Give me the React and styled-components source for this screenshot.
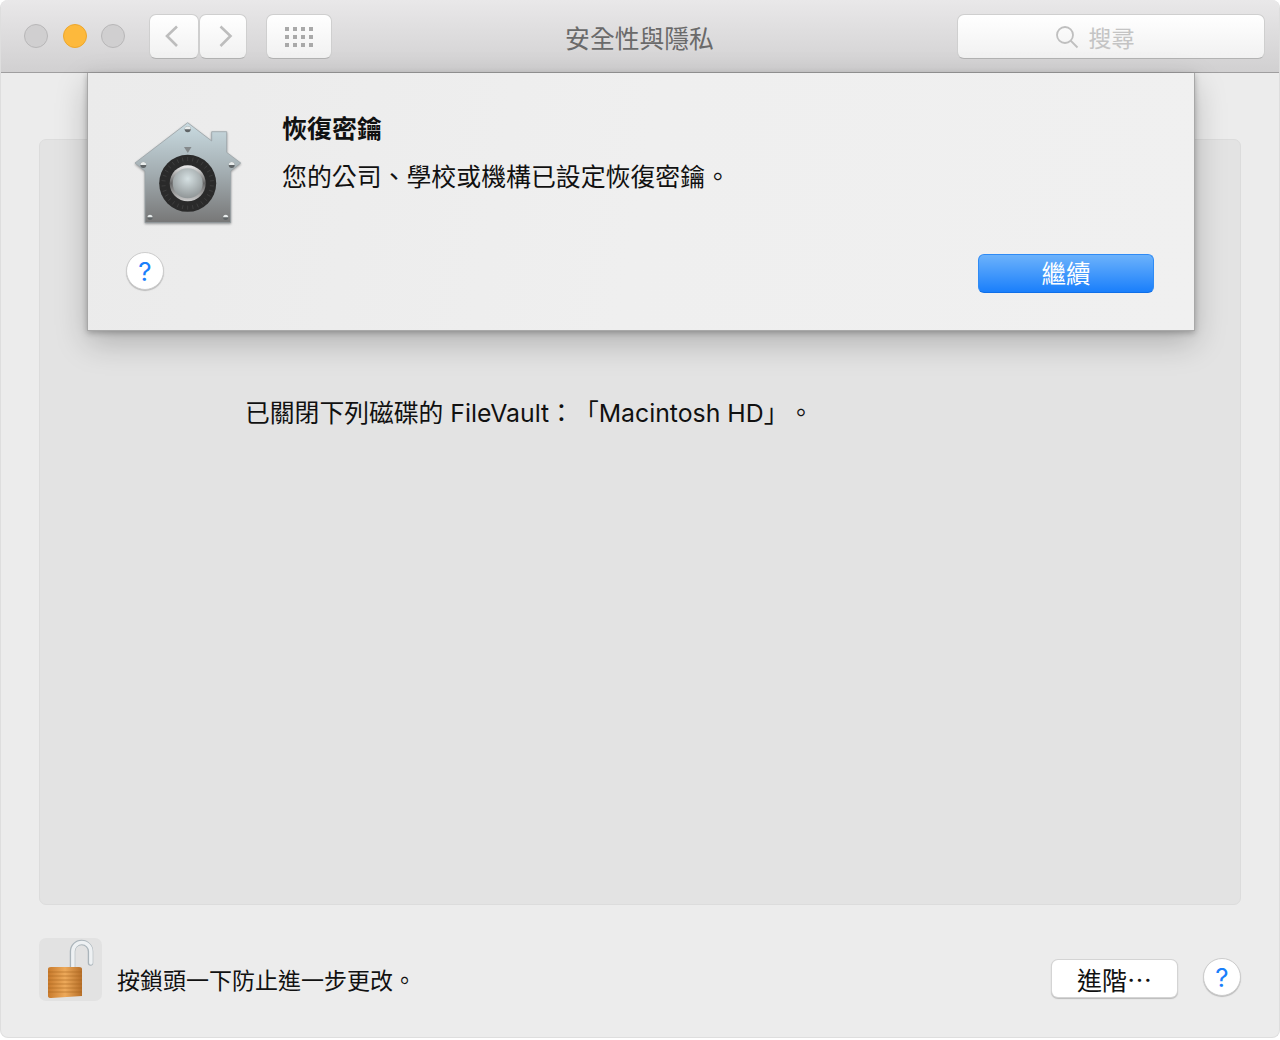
import React from "react";
import styled, { createGlobalStyle } from "styled-components";

const Global = createGlobalStyle`
    html, body {
        margin: 0;
        padding: 0;
        background: #fff;
    }
    * {
        box-sizing: border-box;
    }
`

const FONT = `"Liberation Sans", "Noto Sans CJK TC", sans-serif`

const Win = styled.div`
    position: relative;
    width: 1280px;
    height: 1038px;
    background: #ececec;
    border-radius: 8px;
    border: 1px solid #dedede;
    border-top: none;
    overflow: hidden;
    font-family: ${FONT};
    color: #111;
    text-spacing-trim: space-all;
`

const Toolbar = styled.div`
    display: flex;
    align-items: flex-start;
    height: 73px;
    padding: 14px 14px 0 23px;
    background: linear-gradient(#e9e8e9, #d1d0d1);
    border-bottom: 1px solid #9f9e9f;
`

const Lights = styled.div`
    display: flex;
    gap: 14.5px;
    margin-top: 10px;
    width: 125px;
`

const Light = styled.span`
    width: 24px;
    height: 24px;
    border-radius: 50%;
    background: ${props => props.$on ? "#fdb93c" : "#d0cfd0"};
    border: 1px solid ${props => props.$on ? "#eda72c" : "#b8b7b8"};
`

const ToolButton = styled.div`
    display: flex;
    align-items: center;
    justify-content: center;
    width: ${props => props.$w}px;
    height: 45px;
    margin-right: ${props => props.$mr || 0}px;
    border-radius: 7px;
    background: linear-gradient(#ffffff, #f1f1f1);
    border: 1px solid #cfcfcf;
    border-bottom: 1px solid #b3b3b3;
`

const Title = styled.div`
    flex: 1;
    margin: 10px 0 0 0;
    padding-right: 10px;
    text-align: center;
    font-size: 24.8px;
    line-height: 32px;
    color: #6a6a6a;
`

const Search = styled.div`
    display: flex;
    align-items: center;
    justify-content: center;
    gap: 10px;
    width: 308px;
    height: 45px;
    padding-right: 33px;
    border-radius: 7px;
    background: linear-gradient(#ffffff, #f1f1f1);
    border: 1px solid #cfcfcf;
    border-bottom: 1px solid #b3b3b3;
    font-size: 23px;
    color: #c4c4c4;
`

const Body = styled.div`
    padding: 66px 38px 0 38px;
`

const Panel = styled.div`
    height: 766px;
    padding: 255px 0 0 205px;
    background: #e3e3e3;
    border: 1px solid #dcdcdc;
    border-radius: 7px;
    font-family: Inter, "Noto Sans CJK TC", sans-serif;
    font-size: 24.8px;
    line-height: 36px;
`

const Footer = styled.div`
    display: flex;
    align-items: flex-start;
    margin-top: 33px;
`

const LockBox = styled.div`
    width: 63px;
    height: 63px;
    border-radius: 7px;
    background: #e2e2e2;
`

const LockText = styled.div`
    flex: 1;
    margin: 26px 0 0 15px;
    font-size: 23px;
    line-height: 34px;
`

const PlainButton = styled.div`
    display: flex;
    align-items: center;
    justify-content: center;
    width: 125px;
    height: 37px;
    margin: 22px 26px 0 0;
    border-radius: 6px;
    background: #fff;
    box-shadow: 0 0 0 1px #d4d4d4, 0 1px 1px 1px #bbb;
    font-size: 25px;
`

const Help = styled.div`
    display: flex;
    align-items: center;
    justify-content: center;
    width: 38px;
    height: 38px;
    margin-top: ${props => props.$top || 0}px;
    border-radius: 50%;
    background: #fff;
    border: 1px solid #cdcdcd;
    box-shadow: 0 1px 1px #bbb;
    color: #1a7ffb;
    font-family: Inter, sans-serif;
    font-weight: 400;
    font-size: 26px;
`

const Sheet = styled.div`
    position: absolute;
    top: 73px;
    left: 86px;
    width: 1108px;
    height: 258px;
    display: flex;
    flex-direction: column;
    background: linear-gradient(100deg, #ebebeb, #efefef 50%, #f0f0f0);
    border: 1px solid #a8a8a8;
    border-top: none;
    box-shadow: 0 12px 30px rgba(0, 0, 0, 0.22), 0 2px 6px rgba(0, 0, 0, 0.25);
`

const SheetTop = styled.div`
    display: flex;
    height: 179px;
    padding: 37px 0 0 36px;
`

const SafeIcon = styled.svg`
    flex: none;
    width: 125px;
    height: 125px;
    margin-right: 33px;
    filter: drop-shadow(0 1px 1px rgba(0, 0, 0, 0.35));
`

const SheetHead = styled.div`
    font-size: 25px;
    font-weight: 700;
    line-height: 38px;
`

const SheetText = styled.div`
    margin-top: 10px;
    font-size: 24.9px;
    line-height: 38px;
`

const SheetActions = styled.div`
    display: flex;
    align-items: flex-start;
    justify-content: space-between;
    padding: 0 40px 0 38px;
`

const BlueButton = styled.div`
    display: flex;
    align-items: center;
    justify-content: center;
    width: 176px;
    height: 39px;
    margin-top: 2px;
    padding-bottom: 2px;
    border-radius: 6px;
    background: linear-gradient(#6cb2fb, #1a7ffb);
    border: 1px solid #2f8bf5;
    border-bottom: 1px solid #0f6fe8;
    color: #fff;
    font-size: 24.5px;
`

function Chevron({ left }) {
    return (
        <svg width="20" height="28" viewBox="0 0 20 28" fill="none" stroke="#bdbdbd" strokeWidth="2.6">
            <path d={left ? "M13 3.500 3 13l10 10" : "M7.500 3.500 17.500 13l-10 10"} />
        </svg>
    )
}

function Grid() {
    const cells = []
    for (let r = 0; r < 3; r++) {
        for (let c = 0; c < 4; c++) {
            cells.push(<rect key={r + "-" + c} x={c * 8} y={r * 8} width="4" height="4" fill="#a9a9a9" />)
        }
    }
    return <svg width="28" height="20" viewBox="0 0 28 20">{cells}</svg>
}

function Magnifier() {
    return (
        <svg width="24" height="24" viewBox="0 0 24 24" fill="none" stroke="#bfbfbf" strokeWidth="1.8">
            <circle cx="10" cy="10" r="8" />
            <path d="M15.5 15.5 22.5 22.5" />
        </svg>
    )
}

function Screw({ x, y, r = 3 }) {
    return (
        <g>
            <circle cx={x} cy={y} r={r} fill="#5f6466" />
            <path d={`M${x - r} ${y}a${r} ${r} 0 0 1 ${r * 2} 0z`} fill="#e8ecec" />
        </g>
    )
}

function VaultIcon() {
    const ticks = []
    for (let a = 0; a < 360; a += 12) {
        ticks.push(<path key={a} d="M63.700 47v4" stroke="#404040" strokeWidth="0.8" transform={`rotate(${a} 63.700 73.300)`} />)
    }
    return (
        <SafeIcon viewBox="0 0 125 125">
            <defs>
                <linearGradient id="houseFill" x1="0" y1="0" x2="0" y2="1">
                    <stop offset="0" stopColor="#c9dbe1" />
                    <stop offset="0.5" stopColor="#a3adb1" />
                    <stop offset="1" stopColor="#777" />
                </linearGradient>
                <linearGradient id="knobRim" x1="0" y1="0" x2="0" y2="1">
                    <stop offset="0" stopColor="#eee" />
                    <stop offset="0.5" stopColor="#666" />
                    <stop offset="1" stopColor="#ccc" />
                </linearGradient>
                <radialGradient id="knobFace" cx="0.5" cy="0.35" r="0.75">
                    <stop offset="0" stopColor="#d5e0e2" />
                    <stop offset="1" stopColor="#868b8c" />
                </radialGradient>
            </defs>
            <path
                d="M63.700 12.700 87.700 31V21.700H102.700V42.400L116.700 53 106.700 61V112.700H21V61L11 53z"
                fill="url(#houseFill)"
                stroke="#9aa3a7"
                strokeWidth="0.8"
                strokeLinejoin="round"
            />
            <path d="M60 37h7.500l-3.700 6z" fill="#84898b" />
            <circle cx="63.700" cy="73.300" r="28.500" fill="#2a2a2a" />
            {ticks}
            <circle cx="63.700" cy="73.300" r="18" fill="url(#knobRim)" />
            <circle cx="63.700" cy="73.300" r="15" fill="url(#knobFace)" />
            <Screw x={63.7} y={19.3} />
            <Screw x={19.3} y={55} />
            <Screw x={107.7} y={55} />
            <Screw x={26} y={107.3} r={2.6} />
            <Screw x={101.7} y={107.3} r={2.6} />
        </SafeIcon>
    )
}

function LockIcon() {
    const arc = "M33.500 31V13.500A9 9 0 0 1 51.500 13.500V25"
    return (
        <svg width="63" height="63" viewBox="0 0 63 63">
            <defs>
                <linearGradient id="lockBody" x1="0" y1="0" x2="1" y2="0">
                    <stop offset="0" stopColor="#c87a2c" />
                    <stop offset="0.5" stopColor="#eda95a" />
                    <stop offset="1" stopColor="#b76f28" />
                </linearGradient>
            </defs>
            <path d={arc} fill="none" stroke="#aab4ba" strokeWidth="5.500" strokeLinecap="round" />
            <path d={arc} fill="none" stroke="#eef1f3" strokeWidth="3.600" strokeLinecap="round" transform="translate(0.4 0)" />
            <path d="M9 31q0-2 3-2h28q3 0 3 2v27q-15 1-31 2-3 0-3-2z" fill="url(#lockBody)" />
            <path
                d="M9 34h34M9 38h34M9 42h34M9 46h34M9 50h34M9 54h34"
                stroke="#a5641f"
                strokeWidth="1"
                opacity="0.55"
            />
        </svg>
    )
}

export default function App() {
    return (
        <Win>
            <Global />
            <Toolbar>
                <Lights>
                    <Light />
                    <Light $on />
                    <Light />
                </Lights>
                <ToolButton $w={50}><Chevron left /></ToolButton>
                <ToolButton $w={48} $mr={19}><Chevron /></ToolButton>
                <ToolButton $w={66}><Grid /></ToolButton>
                <Title>安全性與隱私</Title>
                <Search>
                    <Magnifier />
                    搜尋
                </Search>
            </Toolbar>
            <Body>
                <Panel>已關閉下列磁碟的 FileVault：「Macintosh HD」。</Panel>
                <Footer>
                    <LockBox><LockIcon /></LockBox>
                    <LockText>按鎖頭一下防止進一步更改。</LockText>
                    <PlainButton>進階⋯</PlainButton>
                    <Help $top={20}>?</Help>
                </Footer>
            </Body>
            <Sheet>
                <SheetTop>
                    <VaultIcon />
                    <div>
                        <SheetHead>恢復密鑰</SheetHead>
                        <SheetText>您的公司、學校或機構已設定恢復密鑰。</SheetText>
                    </div>
                </SheetTop>
                <SheetActions>
                    <Help>?</Help>
                    <BlueButton>繼續</BlueButton>
                </SheetActions>
            </Sheet>
        </Win>
    )
}
